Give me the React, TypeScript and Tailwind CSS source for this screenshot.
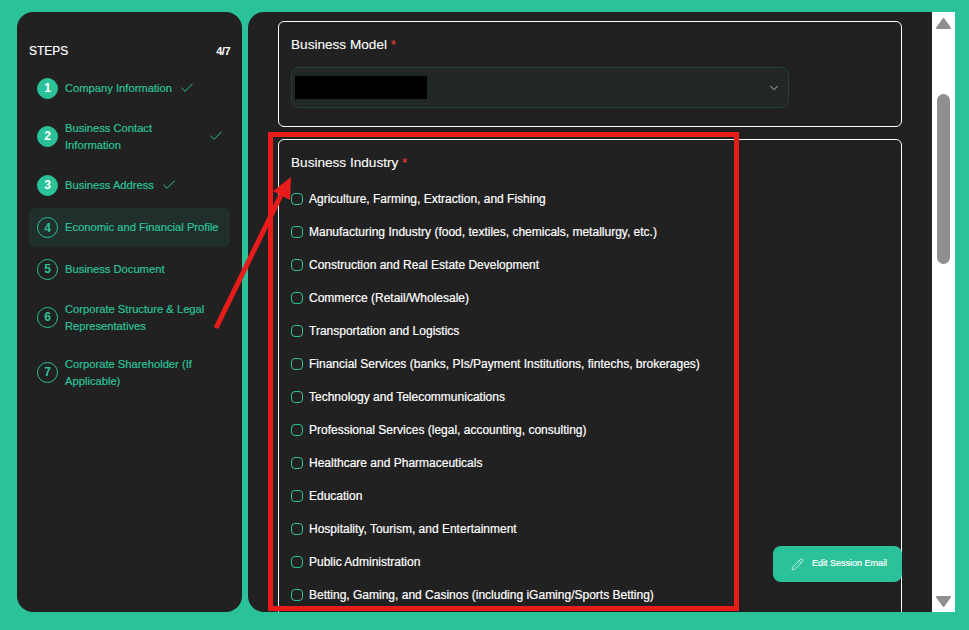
import { Check, ChevronDown, Pencil } from 'lucide-react';

const steps = [
  { n: 1, label: 'Company Information', done: true, h: 'h-[38px]' },
  { n: 2, label: 'Business Contact Information', done: true, h: 'h-[52px]', wide: true, two: true },
  { n: 3, label: 'Business Address', done: true, h: 'h-[40px]' },
  { n: 4, label: 'Economic and Financial Profile', active: true, h: 'h-[39px]' },
  { n: 5, label: 'Business Document', h: 'h-[38px]' },
  { n: 6, label: 'Corporate Structure & Legal Representatives', h: 'h-[52px]', two: true },
  { n: 7, label: 'Corporate Shareholder (If Applicable)', h: 'h-[52px]', two: true },
];

const industries = [
  'Agriculture, Farming, Extraction, and Fishing',
  'Manufacturing Industry (food, textiles, chemicals, metallurgy, etc.)',
  'Construction and Real Estate Development',
  'Commerce (Retail/Wholesale)',
  'Transportation and Logistics',
  'Financial Services (banks, PIs/Payment Institutions, fintechs, brokerages)',
  'Technology and Telecommunications',
  'Professional Services (legal, accounting, consulting)',
  'Healthcare and Pharmaceuticals',
  'Education',
  'Hospitality, Tourism, and Entertainment',
  'Public Administration',
  'Betting, Gaming, and Casinos (including iGaming/Sports Betting)',
];

function Sidebar() {
  return (
    <aside className="w-[225px] shrink-0 rounded-2xl bg-[#212121] px-3 pt-[31px]">
      <div className="flex items-center justify-between text-white">
        <span className="text-xs [-webkit-text-stroke:0.2px]">STEPS</span>
        <span className="text-[11px] leading-4 font-bold tracking-[-0.5px]">4/7</span>
      </div>
      <div className="mt-[10px] flex flex-col gap-[3px]">
        {steps.map((step) => (
          <div
            key={step.n}
            className={`flex items-center gap-[7px] rounded-md pl-2 ${step.h} ${step.active ? 'bg-[#212f2c]' : ''}`}
          >
            <div
              className={`flex h-[21px] w-[21px] shrink-0 items-center justify-center rounded-full border border-[#2bc299] text-xs font-bold ${
                step.done ? 'bg-[#2bc299] text-white' : 'text-[#2bc299]'
              }`}
            >
              {step.n}
            </div>
            <span
              className={`text-[11.2px] leading-[17px] text-[#2bc299] [-webkit-text-stroke:0.2px] ${step.wide ? 'w-[136px]' : ''} ${step.two ? 'pt-[2px]' : ''}`}
            >
              {step.label}
            </span>
            {step.done && <Check size={16} strokeWidth={1.5} className="shrink-0 text-[#2bc299]" />}
          </div>
        ))}
      </div>
    </aside>
  );
}

function Required({ children }: { children: string }) {
  return (
    <h3 className="text-[13.6px] leading-[19px] text-white [-webkit-text-stroke:0.1px]">
      {children} <span className="text-[#e53935]">*</span>
    </h3>
  );
}

function Main() {
  return (
    <main className="relative flex-1 overflow-hidden rounded-l-2xl bg-[#212121] pl-[30px] pr-[30px] pt-[9px]">
      <section className="h-[106px] rounded-md border border-white px-3 pt-[13px]">
        <Required>Business Model</Required>
        <div className="mt-[13px] flex h-[41px] w-[498px] items-center justify-between rounded-lg border border-[#24423a] bg-[#212725] pl-[3px] pr-[7px]">
          <div className="h-[23px] w-[132px] bg-black" />
          <ChevronDown size={14} className="text-[#7a7a7a]" />
        </div>
      </section>
      <section className="mt-3 h-[500px] rounded-md border border-white px-3 pt-[13px]">
        <Required>Business Industry</Required>
        <ul className="mt-[18px] flex flex-col gap-[15px]">
          {industries.map((item) => (
            <li key={item} className="flex h-[18px] items-center gap-[6px] text-xs text-white [-webkit-text-stroke:0.2px]">
              <span className="h-3 w-3 shrink-0 rounded-[4px] border border-[#2bc299]" />
              {item}
            </li>
          ))}
        </ul>
      </section>
      <button className="absolute left-[525px] top-[534px] flex h-9 w-[129px] items-center gap-2 rounded-lg bg-[#2bc299] pl-[18px] text-[9px] text-white [-webkit-text-stroke:0.2px]">
        <Pencil size={13} strokeWidth={1.25} />
        Edit Session Email
      </button>
    </main>
  );
}

function ScrollArrow({ down }: { down?: boolean }) {
  return (
    <svg width="15" height="11" viewBox="0 0 15 11" fill="#8f8f8f" stroke="#8f8f8f" strokeWidth="2" strokeLinejoin="round">
      <polygon points={down ? '1,1 14,1 7.5,10' : '1,10 14,10 7.5,1'} />
    </svg>
  );
}

function Scrollbar() {
  return (
    <div className="flex w-[23px] shrink-0 flex-col items-center bg-white pt-[6px]">
      <ScrollArrow />
      <div className="mt-[65px] h-[170px] w-[13px] rounded-full bg-[#8f8f8f]" />
      <div className="mt-auto mb-[5px] flex">
        <ScrollArrow down />
      </div>
    </div>
  );
}

export default function App() {
  return (
    <div className="relative h-[630px] w-[969px] overflow-hidden bg-[#2bc299] pb-[18px] pl-[17px] pr-[14px] pt-3 font-['Liberation_Sans',sans-serif]">
      <div className="flex h-full gap-[6px]">
        <Sidebar />
        <div className="flex min-w-0 flex-1">
          <Main />
          <Scrollbar />
        </div>
      </div>
      {/* red annotation drawn over the screenshot */}
      <div className="absolute left-[268px] top-[132px] h-[479px] w-[471px] border-[5px] border-[#e91c1c]" />
      <svg className="absolute left-0 top-0" width="969" height="630" fill="none">
        <line x1="216" y1="328" x2="281" y2="195" stroke="#e91c1c" strokeWidth="5" />
        <polygon points="291,177 273,191 290,200" fill="#e91c1c" />
      </svg>
    </div>
  );
}
